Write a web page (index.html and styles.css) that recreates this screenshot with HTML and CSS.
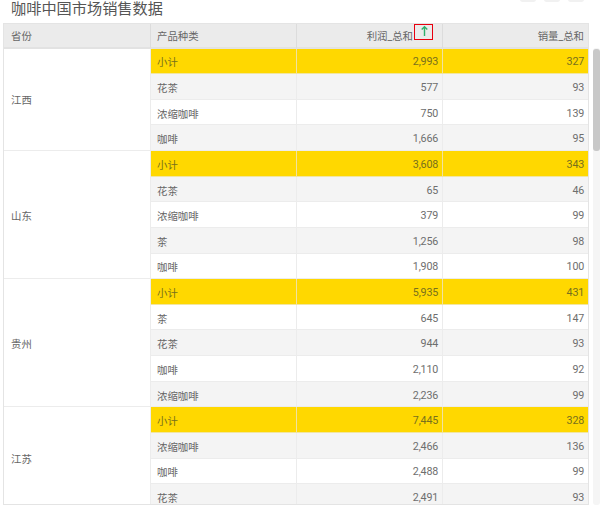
FILE: index.html
```html
<!DOCTYPE html>
<html lang="zh">
<head>
<meta charset="utf-8">
<title>咖啡中国市场销售数据</title>
<link rel="stylesheet" href="styles.css">
</head>
<body>
<div class="page">
  <div class="toolbar"><span class="dot"></span><span class="dot"></span><span class="dot"></span></div>
  <h1 class="title">咖啡中国市场销售数据</h1>
  <div class="frame">
    <div class="table">
      <div class="row head">
        <div class="cell prov">省份</div>
        <div class="cell">产品种类</div>
        <div class="cell num sort">利润_总和<span class="sort-box"><svg width="10" height="12" viewBox="0 0 10 12"><path d="M5.5 11V2M2.7 4.6l2.8-2.8 2.8 2.8" fill="none" stroke="#2fb06c" stroke-width="1.4"/></svg></span></div>
        <div class="cell num">销量_总和</div>
      </div>
      <div class="body">
        <div class="group">
          <div class="prov-cell">江西</div>
          <div class="rows">
            <div class="row sub"><div class="cell">小计</div><div class="cell num">2,993</div><div class="cell num">327</div></div>
            <div class="row alt"><div class="cell">花茶</div><div class="cell num">577</div><div class="cell num">93</div></div>
            <div class="row"><div class="cell">浓缩咖啡</div><div class="cell num">750</div><div class="cell num">139</div></div>
            <div class="row alt"><div class="cell">咖啡</div><div class="cell num">1,666</div><div class="cell num">95</div></div>
          </div>
        </div>
        <div class="group">
          <div class="prov-cell">山东</div>
          <div class="rows">
            <div class="row sub"><div class="cell">小计</div><div class="cell num">3,608</div><div class="cell num">343</div></div>
            <div class="row alt"><div class="cell">花茶</div><div class="cell num">65</div><div class="cell num">46</div></div>
            <div class="row"><div class="cell">浓缩咖啡</div><div class="cell num">379</div><div class="cell num">99</div></div>
            <div class="row alt"><div class="cell">茶</div><div class="cell num">1,256</div><div class="cell num">98</div></div>
            <div class="row"><div class="cell">咖啡</div><div class="cell num">1,908</div><div class="cell num">100</div></div>
          </div>
        </div>
        <div class="group">
          <div class="prov-cell">贵州</div>
          <div class="rows">
            <div class="row sub"><div class="cell">小计</div><div class="cell num">5,935</div><div class="cell num">431</div></div>
            <div class="row"><div class="cell">茶</div><div class="cell num">645</div><div class="cell num">147</div></div>
            <div class="row alt"><div class="cell">花茶</div><div class="cell num">944</div><div class="cell num">93</div></div>
            <div class="row"><div class="cell">咖啡</div><div class="cell num">2,110</div><div class="cell num">92</div></div>
            <div class="row alt"><div class="cell">浓缩咖啡</div><div class="cell num">2,236</div><div class="cell num">99</div></div>
          </div>
        </div>
        <div class="group last">
          <div class="prov-cell">江苏</div>
          <div class="rows">
            <div class="row sub"><div class="cell">小计</div><div class="cell num">7,445</div><div class="cell num">328</div></div>
            <div class="row alt"><div class="cell">浓缩咖啡</div><div class="cell num">2,466</div><div class="cell num">136</div></div>
            <div class="row"><div class="cell">咖啡</div><div class="cell num">2,488</div><div class="cell num">99</div></div>
            <div class="row alt"><div class="cell">花茶</div><div class="cell num">2,491</div><div class="cell num">93</div></div>
          </div>
        </div>
      </div>
    </div>
    <div class="scrollbar"><div class="thumb"></div></div>
  </div>
</div>
</body>
</html>
```
FILE: styles.css
```css
* { box-sizing: border-box; }
html, body { margin: 0; padding: 0; background: #fff; }
body { width: 604px; height: 513px; overflow: hidden; font-family: "Roboto", "Noto Sans CJK SC", sans-serif; color: #666; }
.page { position: relative; padding: 0 0 0 3px; }
.toolbar { position: absolute; top: -3px; right: 20px; display: flex; gap: 8px; }
.dot { width: 16px; height: 5px; border-radius: 3px; background: #f1f1f1; }
.title { margin: 0; height: 23px; padding-left: 8px; font-size: 15.2px; font-weight: 400; line-height: 19px; color: #555; }
.frame { display: flex; align-items: flex-start; gap: 4px; }
.table { width: 586px; height: 482px; overflow: hidden; border: 1px solid #e4e4e4; }
.row { display: flex; height: 25.64px; font-size: 10.4px; }
.cell { flex: 1 1 0; min-width: 0; padding: 2px 4px 0 6px; display: flex; align-items: center; border-right: 1px solid #ececec; border-bottom: 1px solid #ececec; }
.rows .cell:nth-child(1), .rows .cell:nth-child(2) { flex: 0 0 146px; }
.cell:last-child { border-right: 0; }
.num { justify-content: flex-end; font-size: 10.7px; letter-spacing: -0.2px; color: #6e6e6e; }
.head { height: 24.6px; background: #ebebeb; }
.head .cell { flex: 0 0 146px; padding-top: 1px; border-right: 1px solid #dcdcdc; border-bottom: 2px solid #e2e2e2; color: #666; }
.head .cell.num { letter-spacing: 0; font-size: 10.4px; }
.head .prov { flex: 0 0 147px; padding-left: 7px; }
.head .cell:last-child { flex: 1 1 0; border-right: 0; }
.sort { padding-right: 0; }
.sort-box { align-self: flex-start; width: 19px; height: 16px; margin: -1px 9px 0 1px; border: 1.5px solid #e8000f; display: flex; justify-content: center; }
.group { display: flex; }
.prov-cell { flex: 0 0 147px; padding: 1px 0 0 7px; display: flex; align-items: center; background: #fff; font-size: 10.4px; border-right: 1px solid #ececec; border-bottom: 1px solid #ececec; }
.rows { flex: 1 1 0; min-width: 0; }
.sub { background: #ffd800; }
.sub .cell { color: #77701e; border-right: 1px solid #f0e2a0; border-bottom-color: #f2e6a0; }
.sub .cell:last-child { border-right: 0; }
.alt { background: #f4f4f4; }
.scrollbar { width: 7px; height: 457px; margin-top: 25px; background: #f5f5f5; border-radius: 3px; padding: 1px 0 0; }
.thumb { height: 102px; border-radius: 3px; background: #c8c8c8; }
```
